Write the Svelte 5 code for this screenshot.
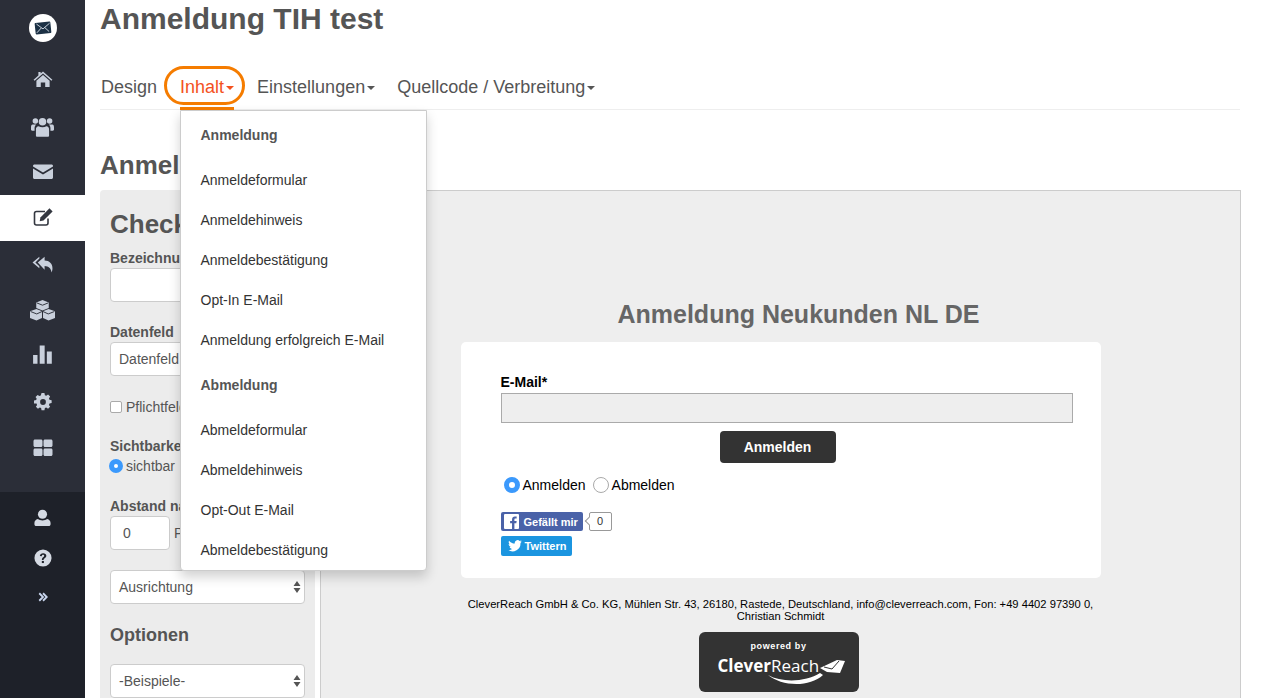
<script>
  const top = [
    { id: 'home', size: 20, d: 'M10 1.500 7.600 3.600V2H5.400v3.500L.6 9.700l1 1.100L10 3.500l8.400 7.300 1-1.100L10 1.500Zm0 3.600-6.600 5.700V17h4.400v-4.400h4.400V17h4.400v-6.200L10 5.100Z' },
    { id: 'users', size: 23, d: 'M10 2.500a3.300 3.300 0 1 1 0 6.600 3.300 3.300 0 0 1 0-6.600ZM3.800 2.800a2.400 2.400 0 1 1 0 4.800 2.400 2.400 0 0 1 0-4.800Zm12.400 0a2.400 2.400 0 1 1 0 4.800 2.400 2.400 0 0 1 0-4.800ZM6.600 9.800c1 .6 2.100.9 3.400.9s2.400-.3 3.400-.9c1.400.2 2.300 1.100 2.300 2.700V18c0 .6-.5 1-1.200 1H5.500c-.7 0-1.200-.4-1.200-1v-5.500c0-1.600.9-2.500 2.300-2.700ZM1.400 8.300h3.100c-.8.700-1.400 1.700-1.400 3v2.400H1c-.6 0-1-.4-1-1v-1.900c0-1.500.5-2.500 1.400-2.500Zm14.100 0h3.100c.9 0 1.400 1 1.400 2.500v1.900c0 .6-.4 1-1 1h-2.100v-2.400c0-1.300-.6-2.300-1.400-3Z' },
    { id: 'mail', size: 20, d: 'M1.500 2.500h17c.8 0 1.500.6 1.500 1.400v.5L10 10.500 0 4.400v-.5c0-.8.7-1.400 1.500-1.400ZM0 6.400l10 6.100 10-6.100v9.100c0 .8-.7 1.500-1.500 1.500h-17C.7 17 0 16.300 0 15.500V6.400Z' },
    { id: 'edit', active: true },
    { id: 'reply', size: 21, d: 'M7 2.500v1.900L3.200 8 7 11.600v1.900L.5 8 7 2.500Zm5 0v3.600c4.500.2 7.500 2.800 7.500 7.400 0 1.500-.4 3-.9 4-.5-3.800-2.800-5.900-6.600-6v3.500L5.500 8 12 2.500Z' },
    { id: 'cubes' },
    { id: 'chart', size: 22, d: 'M1 9h4v8H1V9Zm6-8.500h4.500V17H7V.5Zm6.500 5.500h4.500v11h-4.500V6Z' },
    { id: 'gear', size: 18, d: 'M8.400 0h3.200l.5 2.400 1.500.6 2-1.300 2.300 2.300-1.300 2 .6 1.500 2.400.5v3.200l-2.400.5-.6 1.500 1.300 2-2.300 2.300-2-1.300-1.500.6-.5 2.400H8.400l-.5-2.400-1.500-.6-2 1.300-2.300-2.300 1.300-2-.6-1.500L0 11.600V8.400l2.400-.5.6-1.500-1.300-2L4 2.100l2 1.300 1.500-.6L8.400 0ZM10 6.800a3.200 3.200 0 1 0 0 6.400 3.200 3.200 0 0 0 0-6.400Z' },
    { id: 'grid', size: 20, d: 'M2 1.500h6c.8 0 1.500.7 1.500 1.500v4.500c0 .8-.7 1.500-1.500 1.500H2C1.200 9 .5 8.300.5 7.500V3c0-.8.7-1.500 1.500-1.500Zm10 0h6c.8 0 1.500.7 1.500 1.500v4.500c0 .8-.7 1.500-1.500 1.500h-6c-.8 0-1.500-.7-1.500-1.500V3c0-.8.7-1.500 1.500-1.500ZM2 10.500h6c.8 0 1.500.7 1.500 1.500v4.500c0 .8-.7 1.500-1.500 1.500H2c-.8 0-1.500-.7-1.500-1.500V12c0-.8.7-1.500 1.500-1.500Zm10 0h6c.8 0 1.500.7 1.500 1.500v4.500c0 .8-.7 1.500-1.500 1.500h-6c-.8 0-1.500-.7-1.500-1.500V12c0-.8.7-1.500 1.500-1.500Z' }
  ];
  const tabs = ['Einstellungen', 'Quellcode / Verbreitung'];
  const menu = [
    { title: 'Anmeldung', links: ['Anmeldeformular', 'Anmeldehinweis', 'Anmeldebestätigung', 'Opt-In E-Mail', 'Anmeldung erfolgreich E-Mail'] },
    { title: 'Abmeldung', links: ['Abmeldeformular', 'Abmeldehinweis', 'Opt-Out E-Mail', 'Abmeldebestätigung'] }
  ];
</script>

<div class="app">
  <nav class="side">
    <div class="logo">
      <svg viewBox="0 0 20 16" width="18" height="14"><rect x="1" y="1.500" width="18" height="13" rx="1" fill="#1c3145" transform="rotate(-6 10 8)"/><path d="M2.500 3.500 10 9l7.500-6.500M3 13.500l5-5.500M17 12l-5-4.500" stroke="#dfe6ee" stroke-width="1" fill="none"/></svg>
    </div>
    {#each top as item}
      <div class="item" class:active={item.active}>
        {#if item.id === 'edit'}
          <svg viewBox="0 0 20 20" width="20" height="20"><path d="M15 10.500v4.500c0 1.100-.9 2-2 2H3.500c-1.100 0-2-.9-2-2V5.500c0-1.100.9-2 2-2H12" fill="none" stroke="#333740" stroke-width="1.600"/><path d="M16.500.3 19.600 3.400 10.500 12.500l-3.800.8.7-3.900L16.500.3Z" fill="#333740"/></svg>
        {:else if item.id === 'cubes'}
          <svg viewBox="0 0 24 20" width="25" height="21" fill="#c9d0dc"><path d="m12 0 6 2.300v5.200l-6 2.400-6-2.400V2.300L12 0Z"/><path d="m6.200 8.500 5.300 2.100v6.600L6.200 19.500 0 17.100v-6.300l6.200-2.300Z"/><path d="m17.800 8.500 6.200 2.300v6.300l-6.200 2.400-5.300-2.300v-6.600l5.300-2.100Z"/><path d="m6.500 2.700 5.500 2.200 5.500-2.200M.6 11l5.900 2.300 5-2.300M12.500 11l5 2.300 5.900-2.300" stroke="#2b2e38" fill="none" stroke-width=".9"/></svg>
        {:else}
          <svg viewBox="0 0 20 20" width={item.size} height={item.size} fill="#c9d0dc"><path d={item.d}/></svg>
        {/if}
      </div>
    {/each}
    <div class="side-bottom">
      <div class="sub">
        <svg viewBox="0 0 20 20" width="19" height="19" fill="#d5dae3"><circle cx="10" cy="5.500" r="4.800"/><path d="M5 10.500c1.300 1 3 1.500 5 1.500s3.700-.5 5-1.500c2 .5 3.500 2 3.500 4.300v1.200c0 1.300-1 2-2.300 2H3.800c-1.300 0-2.300-.7-2.300-2v-1.200c0-2.300 1.500-3.800 3.500-4.300Z"/></svg>
      </div>
      <div class="sub">
        <svg viewBox="0 0 20 20" width="18" height="18"><circle cx="10" cy="10" r="9.500" fill="#d5dae3"/><path d="M6.500 7.700C6.800 5.700 8.200 4.600 10.200 4.600c2 0 3.500 1.200 3.500 3 0 2.600-3 2.600-3 4.700H8.800c-.2-3 2.500-3.100 2.500-4.700 0-.7-.5-1.100-1.200-1.100-.8 0-1.300.5-1.500 1.500l-2.100-.3Z" fill="#1e2129"/><rect x="8.700" y="13.300" width="2.300" height="2.300" fill="#1e2129"/></svg>
      </div>
      <div class="sub chev">
        <svg viewBox="0 0 12 12" width="10" height="10" fill="none" stroke="#c9d6ee" stroke-width="2.200"><path d="M1.500 1.500 6 6l-4.500 4.500M6 1.500 10.500 6 6 10.500"/></svg>
      </div>
    </div>
  </nav>

  <main class="main">
    <h1>Anmeldung TIH test</h1>
    <div class="tabs">
      <span class="tab">Design</span>
      <span class="tab current">Inhalt<i class="caret"></i></span>
      {#each tabs as t}
        <span class="tab">{t}<i class="caret"></i></span>
      {/each}
      <div class="ring"></div>
      <div class="bar"></div>
      <div class="menu">
        {#each menu as group}
          <div class="menu-head">{group.title}</div>
          {#each group.links as l}
            <div class="menu-link">{l}</div>
          {/each}
        {/each}
      </div>
    </div>

    <h2 class="section">Anmeldung</h2>

    <div class="content">
      <aside class="form">
        <h2 class="check">Checkbox</h2>
        <label class="lab" for="f1">Bezeichnung</label>
        <input id="f1" class="field wide" />
        <label class="lab gap" for="f2">Datenfeld</label>
        <input id="f2" class="field wide" value="Datenfeld" />
        <div class="check-row"><span class="box"></span><span>Pflichtfeld</span></div>
        <div class="lab vis">Sichtbarkeit</div>
        <div class="radio-row"><span class="radio on small"></span><span>sichtbar</span></div>
        <div class="lab gap dist">Abstand nach unten</div>
        <div class="px-row"><input class="field short" value="0" /><span>Px</span></div>
        <div class="select sel1">Ausrichtung<svg viewBox="0 0 8 14" width="8" height="14" fill="#555"><path d="M4 1 7.500 6h-7L4 1ZM4 13 .5 8h7L4 13Z"/></svg></div>
        <h3>Optionen</h3>
        <div class="select">-Beispiele-<svg viewBox="0 0 8 14" width="8" height="14" fill="#555"><path d="M4 1 7.500 6h-7L4 1ZM4 13 .5 8h7L4 13Z"/></svg></div>
      </aside>

      <section class="preview">
        <h2 class="pv-title">Anmeldung Neukunden NL DE</h2>
        <div class="card">
          <div class="em-label">E-Mail*</div>
          <div class="em-input"></div>
          <div class="btn-wrap"><span class="btn">Anmelden</span></div>
          <div class="radios">
            <span class="radio on"></span><span>Anmelden</span>
            <span class="radio"></span><span>Abmelden</span>
          </div>
          <div class="social">
            <span class="fb">
              <svg viewBox="0 0 14 14" width="15" height="15"><rect width="14" height="14" rx="1" fill="#fff"/><path d="M9.700 14V8.700h1.800l.3-2.100H9.700V5.300c0-.6.2-1 1-1h1.100V2.400c-.2 0-.9-.1-1.600-.1-1.600 0-2.700 1-2.700 2.800v1.500H5.700v2.100h1.800V14h2.200Z" fill="#4a62a8"/></svg>
              Gefällt mir
            </span>
            <span class="count">0</span>
          </div>
          <div class="social tw-row">
            <span class="tw">
              <svg viewBox="0 0 16 14" width="14" height="12" fill="#fff"><path d="M16 1.700c-.6.300-1.200.4-1.900.5.700-.4 1.200-1 1.400-1.800-.6.400-1.300.7-2.100.8A3.300 3.300 0 0 0 7.800 4.200C5.100 4.100 2.700 2.800 1.100.8c-.9 1.500-.4 3.400 1 4.400-.5 0-1-.2-1.500-.4 0 1.600 1.100 3 2.600 3.300-.5.100-1 .2-1.500.1.400 1.300 1.600 2.200 3.100 2.300A6.600 6.600 0 0 1 0 11.800 9.300 9.300 0 0 0 14.400 3.500c.6-.5 1.200-1.100 1.600-1.800Z"/></svg>
              Twittern
            </span>
          </div>
        </div>
        <p class="foot">CleverReach GmbH &amp; Co. KG, Mühlen Str. 43, 26180, Rastede, Deutschland, info@cleverreach.com, Fon: +49 4402 97390 0,<br />Christian Schmidt</p>
        <div class="badge">
          <div class="pw">powered by</div>
          <div class="brand"><b>Clever</b><span class="thin">Reach</span></div>
          <svg class="swoosh" viewBox="0 0 80 30" width="80" height="30"><path d="M1 17c14 8 38 7 52-2l3 2C42 30 14 28 1 17Z" fill="#fff"/><path d="M53 10 70 2l8 1-5 12-13-1-7-4Z" fill="#fff"/><path d="m57 9 8 2 7-8" stroke="#333" stroke-width="1" fill="none"/></svg>
        </div>
      </section>
    </div>
  </main>
</div>

<style>
  :global(body) { margin: 0; background: #fff; }
  .app {
    display: flex;
    height: 698px;
    overflow: hidden;
    font-family: "Liberation Sans", Arial, sans-serif;
    color: #555;
    font-size: 14px;
  }
  .side {
    width: 85px;
    flex: none;
    background: #2b2e38;
    display: flex;
    flex-direction: column;
  }
  .logo {
    width: 28px;
    height: 28px;
    margin: 14px auto 15px;
    background: #fff;
    border-radius: 50%;
    display: flex;
    align-items: center;
    justify-content: center;
  }
  .item {
    height: 46px;
    display: flex;
    align-items: center;
    justify-content: center;
  }
  .item.active { background: #fff; }
  .side-bottom {
    margin-top: 21px;
    flex: 1;
    background: #1e2129;
    padding-top: 6px;
  }
  .sub {
    height: 40px;
    display: flex;
    align-items: center;
    justify-content: center;
  }
  .chev { margin-top: -1px; }
  .main {
    width: 1140px;
    margin-left: 15px;
    flex: none;
  }
  h1 {
    margin: 0;
    padding-top: 2px;
    font-size: 30px;
    line-height: 34px;
    font-weight: 700;
    color: #555;
  }
  .tabs {
    position: relative;
    display: flex;
    margin-top: 29px;
    height: 44px;
    border-bottom: 1px solid #eee;
    font-size: 18px;
    line-height: 44px;
  }
  .tab { margin-left: 1px; margin-right: 22px; white-space: nowrap; }
  .tab:nth-child(3) { margin-right: 21px; }
  .tab.current { color: #f4511e; }
  .tab.current .caret { border-top-color: #f4511e; }
  .caret {
    display: inline-block;
    width: 0;
    height: 0;
    margin-left: 2px;
    vertical-align: middle;
    border-top: 4px solid #555;
    border-left: 4px solid transparent;
    border-right: 4px solid transparent;
  }
  .ring {
    position: absolute;
    left: 64px;
    top: 1px;
    width: 75px;
    height: 33px;
    border: 3px solid #f57c00;
    border-radius: 20px;
  }
  .bar {
    position: absolute;
    left: 80px;
    top: 42px;
    width: 54px;
    height: 3px;
    background: #f57c00;
  }
  .menu {
    position: absolute;
    z-index: 5;
    left: 80px;
    top: 45px;
    width: 247px;
    height: 461px;
    box-sizing: border-box;
    background: #fff;
    border: 1px solid #ccc;
    border-radius: 0 0 4px 4px;
    box-shadow: 0 6px 12px rgba(0, 0, 0, 0.18);
    padding: 4px 0;
    font-size: 14px;
    line-height: 20px;
  }
  .menu-head {
    font-weight: 700;
    padding: 10px 19.500px 15px;
    color: #555;
  }
  .menu-link {
    height: 40px;
    line-height: 40px;
    padding: 0 19.500px;
    color: #333;
    white-space: nowrap;
  }
  .menu-link + .menu-head { padding-top: 15px; }
  h2.section {
    margin: 0;
    padding-top: 40px;
    font-size: 26px;
    line-height: 30px;
    font-weight: 700;
  }
  .content {
    display: flex;
    gap: 5px;
    margin-top: 10px;
  }
  .form {
    width: 215px;
    flex: none;
    box-sizing: border-box;
    height: 508px;
    background: #ececec;
    border-radius: 4px 0 0 0;
    padding: 19px 10px 0;
  }
  .check {
    margin: 0;
    font-size: 26px;
    line-height: 30px;
    font-weight: 700;
    white-space: nowrap;
  }
  .lab {
    display: block;
    font-weight: 700;
    line-height: 20px;
    margin-top: 9px;
    white-space: nowrap;
  }
  .lab.gap { margin-top: 20px; }
  .field {
    display: block;
    box-sizing: border-box;
    height: 34px;
    border: 1px solid #ccc;
    border-radius: 4px;
    padding: 0 8px;
    background: #fff;
    font: 14px "Liberation Sans", Arial, sans-serif;
    color: #555;
  }
  .wide { width: 195px; }
  .short { width: 60px; padding: 0 12px; flex: none; }
  .check-row {
    display: flex;
    align-items: center;
    gap: 4px;
    margin-top: 21px;
    line-height: 20px;
  }
  .box {
    width: 10px;
    height: 10px;
    border: 1px solid #aaa;
    border-radius: 2px;
    background: #fff;
  }
  .lab.vis { margin-top: 19px; }
  .radio-row {
    display: flex;
    align-items: center;
    gap: 3px;
    line-height: 20px;
    margin-left: -1px;
  }
  .lab.dist { margin-top: 20px; }
  .px-row {
    display: flex;
    align-items: center;
    gap: 4px;
  }
  .radio {
    display: inline-block;
    flex: none;
    box-sizing: border-box;
    width: 16px;
    height: 16px;
    border-radius: 50%;
    background: #fff;
    border: 1px solid #aaa;
  }
  .radio.on { background: #fff; border: 5px solid #3b99fc; }
  .radio.small { width: 14px; height: 14px; border-width: 5px; }
  .select {
    position: relative;
    box-sizing: border-box;
    width: 195px;
    height: 34px;
    line-height: 32px;
    background: #fff;
    border: 1px solid #ccc;
    border-radius: 4px;
    padding: 0 8px;
  }
  .select svg { position: absolute; right: 3px; top: 9px; }
  .sel1 { margin-top: 20px; }
  h3 {
    margin: 20px 0 18px;
    font-size: 18px;
    line-height: 22px;
    font-weight: 700;
  }
  .preview {
    width: 921px;
    flex: none;
    box-sizing: border-box;
    height: 508px;
    background: #eee;
    border: 1px solid #ccc;
    border-bottom: 0;
    text-align: center;
    display: flex;
    flex-direction: column;
    align-items: center;
  }
  .pv-title {
    margin: 108px 0 13px 36px;
    font-size: 25px;
    line-height: 30px;
    font-weight: 700;
    color: #666;
  }
  .card {
    box-sizing: border-box;
    width: 640px;
    height: 236px;
    background: #fff;
    border-radius: 5px;
    padding: 32px 28px 0 40px;
    text-align: left;
    color: #000;
  }
  .em-label { font-weight: 700; line-height: 16px; }
  .em-input {
    box-sizing: border-box;
    height: 30px;
    margin-top: 3px;
    background: #eee;
    border: 1px solid #aaa;
  }
  .btn-wrap { display: flex; justify-content: center; margin-top: 8px; padding-right: 18px; }
  .btn {
    width: 116px;
    height: 32px;
    line-height: 32px;
    text-align: center;
    background: #333;
    color: #fff;
    font-weight: 700;
    border-radius: 4px;
  }
  .radios {
    display: flex;
    align-items: center;
    gap: 3px;
    margin: 14px 0 0 3px;
    height: 16px;
  }
  .radios .radio:nth-of-type(3) { margin-left: 4px; }
  .social {
    display: flex;
    align-items: center;
    margin-top: 19px;
    height: 19px;
  }
  .fb, .tw {
    display: inline-flex;
    align-items: center;
    gap: 5px;
    color: #fff;
    font-size: 11px;
    font-weight: 700;
    border-radius: 2px;
    box-sizing: border-box;
  }
  .fb { width: 82px; height: 19px; padding-left: 3px; background: #4a62a8; }
  .count {
    position: relative;
    box-sizing: border-box;
    width: 23px;
    height: 19px;
    margin-left: 6px;
    border: 1px solid #999;
    border-radius: 2px;
    text-align: center;
    font-size: 11px;
    line-height: 17px;
    color: #333;
  }
  .count::before {
    content: "";
    position: absolute;
    left: -4px;
    top: 5px;
    width: 5px;
    height: 5px;
    background: #fff;
    border-left: 1px solid #999;
    border-bottom: 1px solid #999;
    transform: rotate(45deg);
  }
  .tw-row { margin-top: 5px; height: 20px; }
  .tw { width: 71px; height: 20px; padding-left: 7px; background: #1b95e0; gap: 3px; }
  .foot {
    margin: 20px 0 0;
    font-size: 11.200px;
    line-height: 12px;
    color: #000;
    white-space: nowrap;
  }
  .badge {
    position: relative;
    margin: 10px 4px 0 0;
    width: 160px;
    height: 60px;
    background: #333;
    border-radius: 6px;
    color: #fff;
    flex: none;
  }
  .pw { padding-top: 8px; font-size: 9px; line-height: 12px; font-weight: 700; letter-spacing: 0.6px; }
  .brand {
    position: absolute;
    left: 19px;
    top: 22px;
    font-family: "Open Sans", sans-serif;
    font-size: 17px;
    line-height: 24px;
  }
  .brand b { font-weight: 700; }
  .thin { font-weight: 400; }
  .swoosh { position: absolute; left: 68px; top: 26px; width: 80px; height: 30px; }
</style>
